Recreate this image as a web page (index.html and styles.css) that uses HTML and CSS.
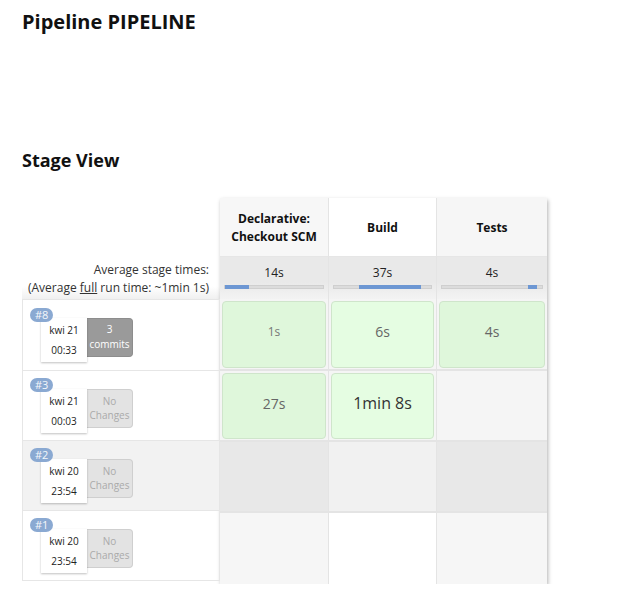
FILE: index.html
```html
<!DOCTYPE html>
<html>
<head>
<meta charset="utf-8">
<link rel="stylesheet" href="styles.css">
</head>
<body>
<h1 class="title">Pipeline PIPELINE</h1>
<h2 class="section">Stage View</h2>
<div class="stage-view">
  <div class="left">
    <div class="left-head"></div>
    <div class="left-avg">
      <div>Average stage times:</div>
      <div>(Average <u>full</u> run time: ~1min 1s)</div>
    </div>
    <div class="run tall">
      <span class="badge">#8</span>
      <div class="card"><span>kwi 21</span><span>00:33</span></div>
      <div class="changes commits">3<br>commits</div>
    </div>
    <div class="run">
      <span class="badge">#3</span>
      <div class="card"><span>kwi 21</span><span>00:03</span></div>
      <div class="changes">No<br>Changes</div>
    </div>
    <div class="run grey">
      <span class="badge">#2</span>
      <div class="card"><span>kwi 20</span><span>23:54</span></div>
      <div class="changes">No<br>Changes</div>
    </div>
    <div class="run">
      <span class="badge">#1</span>
      <div class="card"><span>kwi 20</span><span>23:54</span></div>
      <div class="changes">No<br>Changes</div>
    </div>
  </div>
  <div class="stages">
    <div class="row head">
      <div class="cell c1">Declarative:<br>Checkout SCM</div>
      <div class="cell c2">Build</div>
      <div class="cell c3">Tests</div>
    </div>
    <div class="row avg">
      <div class="cell"><span class="t">14s</span><div class="bar"><div class="fill" style="left:0;width:24px"></div></div></div>
      <div class="cell"><span class="t">37s</span><div class="bar"><div class="fill" style="left:25px;width:62px"></div></div></div>
      <div class="cell"><span class="t">4s</span><div class="bar"><div class="fill" style="left:86px;width:9px"></div></div></div>
    </div>
    <div class="row r1 tall">
      <div class="cell c1"><div class="ok dark s12">1s</div></div>
      <div class="cell c2"><div class="ok light s14">6s</div></div>
      <div class="cell c3"><div class="ok dark s14">4s</div></div>
    </div>
    <div class="row r2">
      <div class="cell c1"><div class="ok dark s14">27s</div></div>
      <div class="cell c2"><div class="ok light s17">1min 8s</div></div>
      <div class="cell c3 empty"></div>
    </div>
    <div class="row r3">
      <div class="cell c1"></div>
      <div class="cell c2"></div>
      <div class="cell c3"></div>
    </div>
    <div class="row r4">
      <div class="cell c1"></div>
      <div class="cell c2"></div>
      <div class="cell c3"></div>
    </div>
  </div>
</div>
</body>
</html>
```
FILE: styles.css
```css
body {
  margin: 0;
  padding: 0 22px;
  font-family: "Open Sans", "Noto Sans", sans-serif;
  color: #333;
  background: #fff;
}
.title {
  margin: 0;
  padding-top: 9px;
  font-size: 20px;
  line-height: 26px;
  font-weight: 700;
  color: #111;
}
.section {
  margin: 0;
  margin-top: 113px;
  font-size: 18px;
  line-height: 24px;
  font-weight: 700;
  color: #111;
}
.stage-view {
  display: flex;
  margin-top: 26px;
}
.left {
  width: 198px;
  display: flex;
  flex-direction: column;
}
.left-head { height: 59px; }
.left-avg {
  height: 42px;
  box-sizing: border-box;
  padding: 4px 11px 0 0;
  text-align: right;
  font-size: 12px;
  line-height: 18px;
  color: #333;
  background: linear-gradient(#fff 70%, #f0f0f0);
}
.left-avg u { text-decoration: underline; }
.run {
  position: relative;
  height: 70px;
  box-sizing: border-box;
  border: 1px solid #e6e6e6;
  border-top: 0;
  display: flex;
  align-items: flex-start;
  padding: 18px 0 0 18px;
}
.run.tall { height: 72px; border-top: 1px solid #e6e6e6; padding-top: 18px; }
.run.grey { background: #f2f2f2; }
.badge {
  position: absolute;
  left: 7px;
  top: 7px;
  height: 14px;
  padding: 0 5px;
  border-radius: 7px;
  background: #8aa9d2;
  color: #f4f7fb;
  font-size: 11px;
  line-height: 14px;
  z-index: 2;
}
.run.tall .badge { top: 8px; }
.card {
  width: 46px;
  height: 44px;
  background: #fff;
  box-shadow: 0 1px 2px rgba(0,0,0,0.25);
  display: flex;
  flex-direction: column;
  align-items: center;
  justify-content: center;
  gap: 6px;
  font-size: 10px;
  line-height: 14px;
  color: #222;
  position: relative;
  z-index: 1;
}
.changes {
  width: 46px;
  height: 39px;
  box-sizing: border-box;
  border: 1px solid #cfcfcf;
  border-left: 0;
  border-radius: 0 4px 4px 0;
  background: #e3e3e3;
  color: #aaa;
  font-size: 10px;
  line-height: 14px;
  text-align: center;
  padding-top: 4px;
}
.changes.commits {
  background: #9a9a9a;
  border-color: #8d8d8d;
  color: #fff;
  line-height: 15px;
  padding-top: 3px;
}
.stages {
  width: 327px;
  box-shadow: 1px 2px 4px rgba(0,0,0,0.3);
  display: flex;
  flex-direction: column;
}
.row {
  display: grid;
  grid-template-columns: 109px 108px 110px;
}
.cell {
  box-sizing: border-box;
  border-right: 1px solid #e4e4e4;
  border-bottom: 2px solid #e4e4e4;
}
.cell:last-child { border-right: 0; }
.head { height: 59px; }
.head .cell {
  display: flex;
  align-items: center;
  justify-content: center;
  text-align: center;
  font-size: 12px;
  line-height: 18px;
  font-weight: 700;
  color: #111;
  border-bottom: 1px solid #e6e6e6;
  padding-top: 2px;
}
.head .c1 { background: #f7f7f7; }
.head .c2 { background: #fff; }
.head .c3 { background: #f6f6f6; }
.avg { height: 42px; }
.avg .cell {
  background: linear-gradient(#e9e9e9 60%, #f3f3f3);
  padding: 3px 4px 0;
  text-align: center;
  border-bottom: 0;
}
.avg .t {
  font-size: 12px;
  line-height: 18px;
  color: #222;
}
.bar {
  position: relative;
  margin-top: 3px;
  height: 4px;
  box-sizing: border-box;
  background: #dcdcdc;
  border: 1px solid #cfcfcf;
}
.fill {
  position: absolute;
  top: -1px;
  height: 4px;
  background: #6d97d3;
}
.r1 { height: 72px; }
.r2, .r3, .r4 { height: 71px; }
.r1 .cell, .r2 .cell { background: #f5f5f5; padding: 2px 2px 1px; }
.ok {
  height: 100%;
  box-sizing: border-box;
  border: 1px solid #cfe5cb;
  border-radius: 4px;
  display: flex;
  align-items: center;
  justify-content: center;
  padding-bottom: 6px;
  color: #666;
}
.ok.dark { background: #dff7db; }
.ok.light { background: #e5fde2; }
.s12 { font-size: 12px; color: #777; }
.s14 { font-size: 14px; }
.s17 { font-size: 16px; color: #333; }
.r3 .c1, .r3 .c3 { background: #e8e8e8; }
.r3 .c2 { background: #f1f1f1; }
.r4 .c1, .r4 .c3 { background: #f6f6f6; }
.r4 .c2 { background: #fff; }
.r4 .cell { border-bottom: 0; }
```
